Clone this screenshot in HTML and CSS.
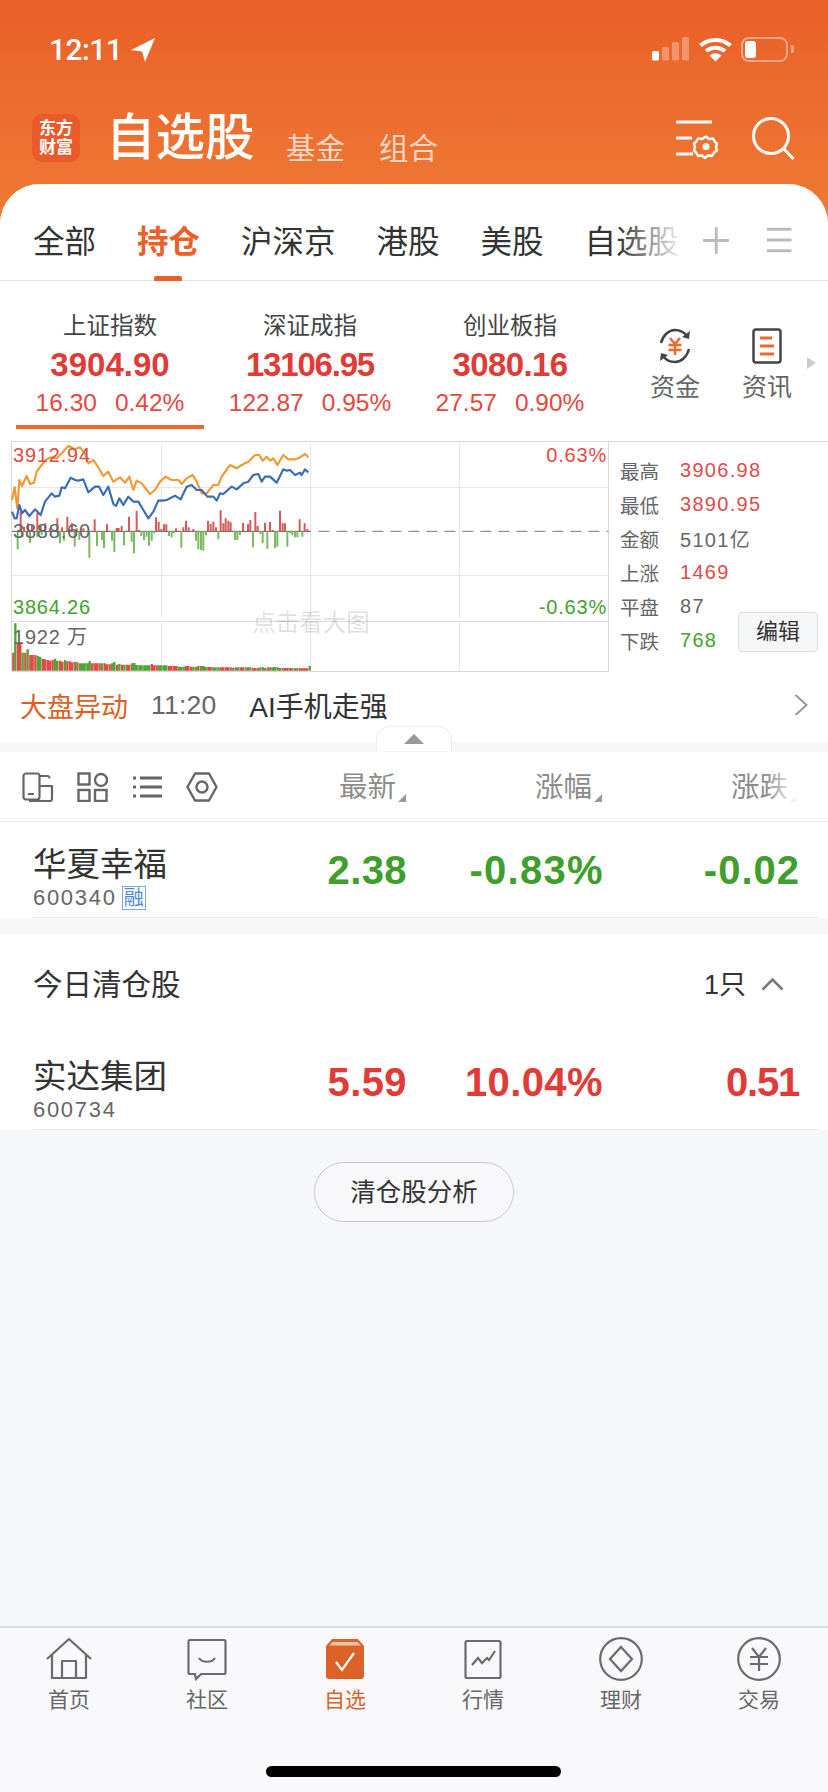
FILE: index.html
```html
<!DOCTYPE html>
<html lang="zh-CN">
<head>
<meta charset="utf-8">
<title>自选股</title>
<link rel="stylesheet" href="styles.css">
</head>
<body>
<div class="phone">
  <div class="status">
    <div class="time"><span>12:11</span>
      <svg class="loc" width="26" height="26" viewBox="0 0 26 26"><path d="M25 1 1 13l11 1.5L15 25z" fill="#fff"/></svg>
    </div>
    <div class="sys">
      <svg width="38" height="24" viewBox="0 0 38 24"><rect x="0" y="14" width="7" height="9.500" rx="1.500" fill="#fff"/><g fill="#fff" fill-opacity=".3"><rect x="10" y="10" width="7" height="13.500" rx="1.500"/><rect x="20" y="5" width="7" height="18.500" rx="1.500"/><rect x="30" y="0" width="7" height="23.500" rx="1.500"/></g></svg>
      <svg class="wifi" width="33" height="25" viewBox="0 0 33 25"><path d="M1.500 8.500C10 1 23 1 31.500 8.500M7 14c5.500-4.500 13.500-4.500 19 0" fill="none" stroke="#fff" stroke-width="4"/><path d="m16.500 24.500-6-6c3.500-3 8.500-3 12 0z" fill="#fff"/></svg>
      <div class="batt"><div class="batt-fill"></div></div>
      <div class="batt-cap"></div>
    </div>
  </div>
  <header class="head">
    <div class="logo"><span>东方</span><span>财富</span></div>
    <div class="title">自选股</div>
    <div class="subs"><span>基金</span><span>组合</span></div>
    <svg class="setting" width="42" height="44" viewBox="0 0 42 44"><g stroke="#fff" stroke-width="3" fill="none"><path d="M0 2h36M0 18h16M0 34h17"/><path d="M30 16.500l3 2.500 4-.5 2 3.500 2 1.500-1 3.500 1 3.500-3 2-2 3.500-4-.5-3 2.500-3-2.500-4 .5-2-3.500-2-2 1-3.500-1-3.500 2-1.500 2-3.500 4 .5z" stroke-width="2.500" stroke-linejoin="round"/></g><circle cx="30" cy="26.500" r="3.500" fill="#fff"/></svg>
    <svg class="search" width="44" height="46" viewBox="0 0 44 46"><circle cx="19" cy="19" r="17.500" fill="none" stroke="#fff" stroke-width="3"/><path d="m32 32 9.500 10" stroke="#fff" stroke-width="3" fill="none"/></svg>
  </header>

  <main class="card">
    <nav class="tabs">
      <div class="tab-list">
        <span>全部</span><span class="active">持仓</span><span>沪深京</span><span>港股</span><span>美股</span><span>自选股</span>
      </div>
      <svg class="plus" width="27" height="27" viewBox="0 0 27 27"><path d="M13.500 0v27M0 13.500h27" stroke="#bbb" stroke-width="3"/></svg>
      <svg class="menu" width="25" height="26" viewBox="0 0 25 26"><path d="M0 2h25M0 13h25M0 24h25" stroke="#bbb" stroke-width="3"/></svg>
    </nav>

    <section class="indices">
      <div class="index current">
        <div class="i-name">上证指数</div><div class="i-val">3904.90</div>
        <div class="i-chg"><span>16.30</span><span>0.42%</span></div>
      </div>
      <div class="index">
        <div class="i-name">深证成指</div><div class="i-val tight-a">13106.95</div>
        <div class="i-chg"><span>122.87</span><span>0.95%</span></div>
      </div>
      <div class="index">
        <div class="i-name">创业板指</div><div class="i-val tight-b">3080.16</div>
        <div class="i-chg"><span>27.57</span><span>0.90%</span></div>
      </div>
      <div class="shortcut first-short">
        <svg width="36" height="36" viewBox="0 0 36 36"><g fill="none" stroke="#444" stroke-width="2.500"><path d="M4 15C6 7 12 2 18 2c5 0 9 2 12 6M32 21c-2 8-8 13-14 13-5 0-9-2-12-6"/></g><path d="m33 3-1 8-7-2zM3 33l1-8 7 2z" fill="#444"/><path d="m13 10 5 6 5-6M11.500 17h13M11.500 22h13M18 16v11" fill="none" stroke="#ee6a2c" stroke-width="2.500"/></svg>
        <span>资金</span>
      </div>
      <div class="shortcut">
        <svg width="30" height="36" viewBox="0 0 30 36"><rect x="1.500" y="1.500" width="27" height="33" rx="2.500" fill="none" stroke="#444" stroke-width="2.500"/><path d="M8 10h12M8 18h14M8 26h14" stroke="#ee6a2c" stroke-width="3"/></svg>
        <span>资讯</span>
      </div>
      <div class="more"></div>
    </section>

    <section class="chart-row">
      <div class="chart">
        <svg class="chart-svg" width="598" height="231" viewBox="33 33 1794 693">
          <g fill="none" stroke="#e3e3e8" stroke-width="3">
            <path d="M35 172H1825M35 436H1825M485 42V565M485 577V722M932 42V565M932 577V722M1378 42V565M1378 577V722"/>
          </g>
          <path d="M35 574H1825" fill="none" stroke="#d8d8dc" stroke-width="3"/>
          <path d="M36 304H932" fill="none" stroke="#555" stroke-width="3"/>
          <path d="M955 304H1825" fill="none" stroke="#777" stroke-width="3" stroke-dasharray="33 21"/>
          <path fill="none" stroke="#d9595a" stroke-width="6" d="M62 304V245M72 304V290M84 304V280M96 304V285M112 304V248M122 304V285M135 304V280M150 304V295M172 304V265M186 304V292M202 304V260M216 304V280M230 304V295M250 304V295M284 304V268M321 304V283M350 304V294M356 304V294M365 304V288M387 304V260M410 304V243M417 304V300M468 304V262M476 304V275M484 304V297M492 304V283M499 304V283M528 304V295M550 304V292M558 304V272M566 304V292M580 304V297M624 304V273M632 304V282M640 304V275M648 304V292M662 304V241M670 304V280M677 304V265M685 304V272M692 304V277M729 304V279M744 304V282M751 304V270M766 304V246M773 304V288M795 304V278M810 304V276M818 304V300M840 304V242M848 304V280M855 304V280M899 304V268M914 304V280M922 304V297"/>
          <path fill="none" stroke="#7cba62" stroke-width="6" d="M53 304V358M68 304V320M90 304V338M112 304V320M125 304V315M180 304V340M192 304V332M224 304V350M238 304V330M268 304V383M291 304V348M306 304V330M312 304V355M336 304V332M343 304V366M372 304V346M395 304V335M402 304V370M424 304V318M432 304V330M440 304V320M447 304V347M455 304V332M462 304V310M507 304V318M515 304V322M522 304V310M544 304V353M588 304V332M595 304V358M603 304V360M610 304V362M618 304V316M655 304V328M705 304V330M712 304V330M720 304V315M759 304V352M781 304V312M788 304V340M802 304V356M825 304V355M832 304V350M862 304V350M870 304V310M877 304V315M885 304V322M892 304V322M907 304V320"/>
          <polyline fill="none" stroke="#f09a33" stroke-width="6.500" stroke-linejoin="round" points="36,210 44,172 52,235 58,150 66,168 80,138 90,162 102,158 110,125 125,105 140,88 155,82 170,85 185,70 205,48 215,52 225,58 240,52 255,70 265,100 280,90 295,112 310,138 325,125 340,155 360,142 375,158 388,140 400,180 410,152 425,160 450,192 465,180 480,155 497,140 515,150 535,150 545,162 560,145 578,135 590,155 605,190 620,190 640,165 655,165 665,140 690,105 710,115 725,105 745,95 765,75 778,75 788,92 800,80 810,92 820,85 832,105 850,75 865,88 885,88 895,85 915,72 925,82"/>
          <polyline fill="none" stroke="#3a6db5" stroke-width="6.500" stroke-linejoin="round" points="36,245 44,265 50,265 58,225 66,250 75,240 88,258 105,238 122,255 135,215 155,190 165,200 178,197 185,172 195,175 212,143 225,150 235,152 250,148 265,187 285,170 297,170 310,195 325,170 340,222 348,228 358,205 370,225 385,200 400,215 415,215 430,240 445,265 460,245 475,212 487,212 500,210 525,197 542,208 560,170 575,165 590,180 605,180 622,200 640,200 650,212 660,190 670,192 695,170 710,178 730,160 745,155 760,135 775,132 785,155 795,140 810,140 830,158 850,118 860,122 870,120 885,135 900,128 905,135 915,118 925,127"/>
          <path fill="none" stroke="#e24a47" stroke-width="7" d="M40 722V668M54 722V637M61 722V637M76 722V668M91 722V675M98 722V675M106 722V675M128 722V686M135 722V688M143 722V690M150 722V692M158 722V690M180 722V692M187 722V695M202 722V694M210 722V694M217 722V697M232 722V697M276 722V700M284 722V700M291 722V700M299 722V700M314 722V700M321 722V703M329 722V703M351 722V704M366 722V704M381 722V704M388 722V704M455 722V702M462 722V706M470 722V706M507 722V708M514 722V708M522 722V708M529 722V708M558 722V708M565 722V708M573 722V710M595 722V708M625 722V711M632 722V711M662 722V712M669 722V712M677 722V712M684 722V712M692 722V712M707 722V712M722 722V712M729 722V712M744 722V712M759 722V714M766 722V714M774 722V714M796 722V714M811 722V712M840 722V714M855 722V714M862 722V714M870 722V714M885 722V715M900 722V715M907 722V715M914 722V715M921 722V715"/>
          <path fill="none" stroke="#4fa534" stroke-width="7" d="M46 722V580M68 722V668M83 722V658M113 722V678M120 722V680M165 722V686M172 722V692M195 722V690M225 722V695M240 722V700M247 722V700M254 722V700M262 722V700M269 722V693M306 722V700M336 722V700M343 722V696M358 722V702M373 722V704M396 722V700M403 722V699M410 722V705M418 722V706M425 722V706M433 722V706M440 722V706M447 722V706M477 722V706M484 722V706M492 722V706M499 722V706M536 722V710M543 722V710M551 722V710M580 722V710M588 722V710M603 722V708M610 722V708M617 722V710M640 722V712M647 722V712M655 722V712M699 722V713M714 722V712M737 722V712M751 722V712M781 722V712M789 722V712M804 722V712M818 722V712M825 722V711M833 722V712M848 722V714M877 722V714M892 722V714M929 722V708"/>
        </svg>
        <span class="lb lb-hi">3912.94</span>
        <span class="lb lb-mid">3888.60</span>
        <span class="lb lb-lo">3864.26</span>
        <span class="lb lb-vol">1922 万</span>
        <span class="lb lb-rhi">0.63%</span>
        <span class="lb lb-rlo">-0.63%</span>
        <span class="lb-big">点击看大图</span>
      </div>
      <div class="stats">
        <div class="stat"><span class="s-k">最高</span><span class="s-v red">3906.98</span></div>
        <div class="stat"><span class="s-k">最低</span><span class="s-v red">3890.95</span></div>
        <div class="stat"><span class="s-k">金额</span><span class="s-v">5101亿</span></div>
        <div class="stat"><span class="s-k">上涨</span><span class="s-v red">1469</span></div>
        <div class="stat"><span class="s-k">平盘</span><span class="s-v">87</span></div>
        <div class="stat"><span class="s-k">下跌</span><span class="s-v green">768</span></div>
        <div class="edit">编辑</div>
      </div>
    </section>

    <section class="ticker">
      <span class="t-tag">大盘异动</span><span class="t-time">11:20</span><span class="t-text">AI手机走强</span>
      <svg class="t-arrow" width="14" height="22" viewBox="0 0 14 22"><path d="m1.500 1 11 10-11 10" fill="none" stroke="#999" stroke-width="2"/></svg>
      <div class="handle"><div class="handle-tri"></div></div>
    </section>

    <div class="gap gap-a"></div>

    <section class="toolbar grid">
      <div class="tools">
        <svg width="32" height="30" viewBox="0 0 32 30"><g fill="none" stroke="#666" stroke-width="2.200" stroke-linejoin="round"><rect x="1.500" y="1.500" width="16" height="26" rx="2.500"/><path d="M17.500 4H26l2 2M17.500 14h12.500v13a2 2 0 0 1-2 2H8v-1.500"/></g><path d="M6 22h6" stroke="#666" stroke-width="2"/></svg>
        <svg width="31" height="30" viewBox="0 0 31 30"><g fill="none" stroke="#666" stroke-width="2.400"><rect x="1.500" y="1.500" width="11" height="11"/><circle cx="24" cy="8" r="6"/><rect x="1.500" y="18" width="11" height="11"/><rect x="18" y="18" width="11.500" height="11"/></g></svg>
        <svg width="29" height="24" viewBox="0 0 29 24"><g stroke="#666"><path d="M7 3h22M7 12h22M7 21h22" stroke-width="3"/><path d="M0 3h3M0 12h3M0 21h3" stroke-width="3"/></g></svg>
        <svg width="32" height="30" viewBox="0 0 32 30"><path d="M9 1.500h14L30.500 15 23 28.500H9L1.500 15z" fill="none" stroke="#666" stroke-width="2.400" stroke-linejoin="round"/><circle cx="16" cy="15" r="5.500" fill="none" stroke="#666" stroke-width="2.400"/></svg>
      </div>
      <div class="th">最新<i class="tri"></i></div>
      <div class="th">涨幅<i class="tri"></i></div>
      <div class="th th-fade">涨跌<i class="tri"></i></div>
    </section>

    <section class="stock grid first">
      <div class="st-name">
        <div class="nm">华夏幸福</div>
        <div class="cd">600340<span class="tag">融</span></div>
      </div>
      <div class="num green-b">2.38</div>
      <div class="num green-b wide-a">-0.83%</div>
      <div class="num green-b wide-b">-0.02</div>
    </section>

    <div class="gap gap-b"></div>

    <section class="sec-head">
      <span class="sec-title">今日清仓股</span>
      <span class="sec-count">1只</span>
      <svg class="sec-chev" width="23" height="14" viewBox="0 0 23 14"><path d="m1.500 12.500 10-10 10 10" fill="none" stroke="#777" stroke-width="2.500"/></svg>
    </section>

    <section class="stock grid second">
      <div class="st-name">
        <div class="nm">实达集团</div>
        <div class="cd">600734</div>
      </div>
      <div class="num red-b">5.59</div>
      <div class="num red-b">10.04%</div>
      <div class="num red-b narrow-a">0.51</div>
    </section>

    <div class="rest">
      <div class="pill">清仓股分析</div>
    </div>
  </main>

  <footer class="bar">
    <div class="nav-item">
      <svg width="46" height="42" viewBox="0 0 46 42"><path d="M1 21 23 1l22 20M6 16v24h34V16M16 40V23h14v17" fill="none" stroke="#6b6b6b" stroke-width="2.200" stroke-linejoin="round"/></svg>
      <span>首页</span>
    </div>
    <div class="nav-item">
      <svg width="40" height="42" viewBox="0 0 40 42"><path d="M3 2h34a1.500 1.500 0 0 1 1.500 1.500v31a1.500 1.500 0 0 1-1.500 1.500H14l-5 5-1-5H3a1.500 1.500 0 0 1-1.500-1.500v-31A1.500 1.500 0 0 1 3 2z" fill="none" stroke="#6b6b6b" stroke-width="2.200"/><path d="M12 20c3 5 13 5 16 0" fill="none" stroke="#6b6b6b" stroke-width="2.200"/></svg>
      <span>社区</span>
    </div>
    <div class="nav-item on">
      <svg width="38" height="42" viewBox="0 0 38 42"><path d="M6 1h26l6 7v30a3 3 0 0 1-3 3H3a3 3 0 0 1-3-3V8z" fill="#dc6228"/><path d="M3 7.500 6.500 4h25L35 7.500z" fill="#f6c3a6"/><path d="m10 24 6 8 12-17" fill="none" stroke="#fff" stroke-width="2.200"/></svg>
      <span>自选</span>
    </div>
    <div class="nav-item">
      <svg width="38" height="42" viewBox="0 0 38 42"><rect x="1.500" y="3" width="35" height="37" rx="1.500" fill="none" stroke="#6b6b6b" stroke-width="2.200"/><path d="m8 27 6-7 4 5 5-5 2 2 6-9" fill="none" stroke="#6b6b6b" stroke-width="2.200"/></svg>
      <span>行情</span>
    </div>
    <div class="nav-item">
      <svg width="44" height="44" viewBox="0 0 44 44"><circle cx="22" cy="22" r="20.800" fill="none" stroke="#6b6b6b" stroke-width="2.200"/><path d="M22 10 33 22 22 34 11 22z" fill="none" stroke="#6b6b6b" stroke-width="2.200"/></svg>
      <span>理财</span>
    </div>
    <div class="nav-item">
      <svg width="44" height="44" viewBox="0 0 44 44"><circle cx="22" cy="22" r="20.800" fill="none" stroke="#6b6b6b" stroke-width="2.200"/><path d="m15 11 7 9 7-9M13 20h18M13 27h18M22 20v14" fill="none" stroke="#6b6b6b" stroke-width="2.200"/></svg>
      <span>交易</span>
    </div>
    <div class="home"></div>
  </footer>
</div>
</body>
</html>
```
FILE: styles.css
```css
* { box-sizing: border-box; margin: 0; padding: 0; }
html, body { width: 828px; height: 1792px; overflow: hidden; }
body { font-family: "Liberation Sans", "Noto Sans CJK SC", sans-serif; color: #333; }
.phone {
  width: 828px; height: 1792px; display: flex; flex-direction: column;
  background: linear-gradient(#ea6029, #ef7b34) no-repeat;
  background-size: 100% 226px;
}

/* status bar */
.status { height: 100px; padding: 36px 34px 0 49px; display: flex; justify-content: space-between; align-items: flex-start; flex: none; }
.time { display: flex; align-items: center; gap: 8px; color: #fff; font-family: Roboto, sans-serif; font-weight: 500; font-size: 30px; line-height: 28px; letter-spacing: -.6px; }
.sys { display: flex; align-items: center; height: 26px; position: relative; }
.wifi { margin-left: 9px; }
.batt { width: 47px; height: 25px; margin-left: 9px; border: 2px solid rgba(255,255,255,.42); border-radius: 8px; padding: 2px; }
.batt-fill { width: 11px; height: 17px; background: #fff; border-radius: 3px; }
.batt-cap { width: 3px; height: 8px; margin-left: 3px; background: rgba(255,255,255,.42); border-radius: 0 2px 2px 0; }

/* header */
.head { height: 84px; flex: none; padding: 14px 32px 0 32px; display: flex; align-items: flex-start; position: relative; }
.logo { width: 48px; height: 48px; background: #ea5a2b; border-radius: 10px; display: flex; flex-direction: column; align-items: center; justify-content: center; color: #fff; font-size: 17px; line-height: 19px; font-weight: 700; }
.title { margin: -3px 0 0 26px; font-size: 49.500px; line-height: 54px; color: #fff; font-weight: 500; }
.subs { display: flex; gap: 34px; margin: 16px 0 0 31.500px; font-size: 29.500px; line-height: 38px; color: rgba(255,255,255,.72); }
.setting { margin: 6px 0 0 auto; }
.search { margin: 3px 0 0 34px; }

/* card */
.card { flex: 1; border-radius: 40px 40px 0 0; display: flex; flex-direction: column; min-height: 0; background-color: #f6f7f9; overflow: hidden; }
.tabs { height: 97px; flex: none; background: #fff; border-bottom: 1px solid #e4e4e6; display: flex; align-items: center; padding: 20px 36px 0 33px; position: relative; }
.tab-list { width: 651px; flex: none; display: flex; gap: 41px; font-size: 31.500px; line-height: 40px; color: #333; position: relative; white-space: nowrap; overflow: hidden; }
.tab-list::after { content: ""; position: absolute; top: 0; bottom: 0; right: 0; width: 66px; background: linear-gradient(90deg, rgba(255,255,255,0), #fff 100%); }
.tab-list .active { color: #ea6029; font-weight: 700; position: relative; }
.tabs::after { content: ""; position: absolute; left: 154px; bottom: -1px; width: 28px; height: 5px; background: #ea6029; border-radius: 2px 2px 0 0; }
.plus { margin: 0 0 4px 19px; }
.menu { margin: 0 0 4px 38px; }

/* indices */
.indices { height: 160px; flex: none; background: #fff; display: flex; padding: 0 0 0 10px; position: relative; }
.index { width: 200px; text-align: center; flex: none; padding-top: 29px; position: relative; }
.index.current::after { content: ""; position: absolute; left: 6px; right: 6px; top: 144px; height: 4px; background: #ee6a2c; }
.i-name { font-size: 23.500px; line-height: 32px; color: #444; }
.i-val { font-size: 33px; line-height: 40px; font-weight: 700; color: #e03b37; margin-top: 3px; }
.tight-a { letter-spacing: -1.200px; }
.tight-b { letter-spacing: -.6px; }
.i-chg { font-size: 24.500px; line-height: 30px; color: #e5483f; display: flex; justify-content: center; gap: 18px; margin-top: 3px; }
.shortcut { position: relative; width: 92px; flex: none; display: flex; flex-direction: column; align-items: center; font-size: 25px; line-height: 32px; color: #666; padding-top: 47px; gap: 7px; }
.first-short { margin-left: 19px; }
.more { width: 0; height: 0; margin: 76px 0 0 -6px; border-left: 9px solid #ccc; border-top: 6px solid transparent; border-bottom: 6px solid transparent; }

/* chart */
.chart-row { height: 231px; flex: none; background: #fff; display: flex; padding-left: 11px; }
.chart { width: 598px; height: 231px; flex: none; position: relative; border: 1px solid #d8d8dc; }
.chart-svg { position: absolute; left: -1px; top: -1px; display: block; }
.lb { position: absolute; font-size: 20px; line-height: 24px; letter-spacing: .8px; white-space: nowrap; }
.lb-hi { left: 1px; top: 1px; color: #e24a47; }
.lb-mid { left: 1px; top: 77px; color: #666; }
.lb-lo { left: 1px; top: 153px; color: #3fa32c; }
.lb-vol { left: 1px; top: 183px; color: #666; }
.lb-rhi { right: 1px; top: 1px; color: #e24a47; }
.lb-rlo { right: 1px; top: 153px; color: #3fa32c; }
.lb-big { position: absolute; left: 240px; top: 165px; width: 118px; text-align: center; font-size: 23.500px; line-height: 32px; color: rgba(0,0,0,.14); white-space: nowrap; }
.stats { flex: 1; border-top: 1px solid #d8d8dc; padding: 11px 0 0 11px; position: relative; }
.stat { height: 34px; display: flex; align-items: center; }
.s-k { width: 60px; font-size: 19.500px; color: #666; flex: none; }
.s-v { font-size: 20px; letter-spacing: 1.300px; color: #666; }
.red { color: #e24a47; }
.green { color: #3fa32c; }
.edit { position: absolute; right: 10px; top: 170px; width: 80px; height: 40px; background: #f6f7f9; border: 1px solid #dcdcdf; border-radius: 4px; font-size: 22px; line-height: 38px; text-align: center; color: #333; }

/* ticker */
.ticker { height: 70px; flex: none; background: #fff; display: flex; align-items: center; padding: 0 20px 4px 20px; position: relative; font-size: 27px; }
.t-tag { color: #dd5f25; }
.t-time { margin-left: 23px; color: #666; font-size: 26.500px; letter-spacing: .2px; }
.t-text { margin-left: 33px; color: #333; font-size: 28px; }
.t-arrow { margin-left: auto; }
.handle { position: absolute; left: 376px; top: 54px; width: 76px; height: 25px; background: #fff; border: 1px solid #ececee; border-bottom: 0; border-radius: 14px 14px 0 0; z-index: 2; }
.handle-tri { width: 0; height: 0; margin: 7px auto 0; border-left: 10px solid transparent; border-right: 10px solid transparent; border-bottom: 10px solid #999; }

.gap { flex: none; background: #f6f7f9; }
.gap-a { height: 10px; }
.gap-b { height: 16px; }

/* table */
.grid { display: grid; grid-template-columns: minmax(0, 1fr) 196px 196px 196px; padding-right: 30px; background: #fff; flex: none; }
.toolbar { height: 70px; border-bottom: 1px solid #e9e9eb; padding-left: 22px; align-items: center; }
.tools { display: flex; align-items: center; gap: 23px; min-width: 0; }
.tools svg { flex: none; }
.tools svg:nth-child(3) { margin-left: 2px; margin-right: 1px; }
.th { display: flex; align-items: center; justify-content: flex-end; font-size: 28.500px; line-height: 36px; color: #8c8c8c; position: relative; }
.tri { width: 0; height: 0; margin: 22px 0 0 2px; border-left: 8px solid transparent; border-bottom: 8px solid #999; }
.th-fade::after { content: ""; position: absolute; right: 0; top: -4px; bottom: -4px; width: 32px; background: linear-gradient(90deg, rgba(255,255,255,0), #fff 100%); }
.stock { height: 96px; position: relative; align-items: start; padding-left: 33px; }
.stock::after { content: ""; position: absolute; left: 33px; right: 10px; bottom: 0; height: 1px; background: #e9e9eb; }
.st-name { padding-top: 21px; }
.nm { font-size: 33.500px; line-height: 44px; color: #333; white-space: nowrap; }
.cd { font-size: 22px; line-height: 26px; letter-spacing: 1.700px; color: #666; display: flex; align-items: center; margin-top: -2px; white-space: nowrap; }
.tag { width: 24px; height: 24px; margin-left: 5px; border: 1px solid #7aa6e8; font-size: 20px; line-height: 22px; text-align: center; letter-spacing: 0; color: #4f86dc; overflow: hidden; }
.num { font-size: 40px; line-height: 48px; font-weight: 700; text-align: right; padding-top: 24px; height: 72px; letter-spacing: .4px; margin-right: -1px; }
.wide-a { letter-spacing: 1.300px; margin-right: -2px; }
.wide-b { letter-spacing: 1px; margin-right: -2px; }
.narrow-a { letter-spacing: -1.200px; }
.green-b { color: #3f9e2c; }
.red-b { color: #e03b37; }
.sec-head { height: 100px; flex: none; background: #fff; display: flex; align-items: center; padding: 0 44px 4px 33px; }
.sec-title { font-size: 29.500px; color: #333; }
.sec-count { margin-left: auto; font-size: 27px; color: #333; margin-right: 15px; }
.sec-chev { margin-top: 4px; }
.rest { flex: 1; background: #f6f7f9; display: flex; justify-content: center; align-items: flex-start; padding-top: 32px; }
.pill { width: 200px; height: 60px; border: 1px solid #c9c9cc; border-radius: 30px; background: #f8f8fa; font-size: 25.500px; line-height: 58px; text-align: center; color: #333; }

/* tab bar */
.bar { height: 166px; flex: none; background: #f9f9fb; border-top: 2px solid #dcdce4; display: grid; grid-template-columns: repeat(6, 138px); padding-top: 9px; position: relative; align-content: start; }
.nav-item { display: flex; flex-direction: column; align-items: center; font-size: 21px; line-height: 28px; color: #666; height: 80px; justify-content: flex-start; }
.nav-item svg { height: 44px; flex: none; }
.nav-item span { margin-top: 5px; }
.nav-item.on { color: #dc6228; }
.home { position: absolute; left: 266px; top: 138px; width: 295px; height: 11px; background: #000; border-radius: 6px; }
```
